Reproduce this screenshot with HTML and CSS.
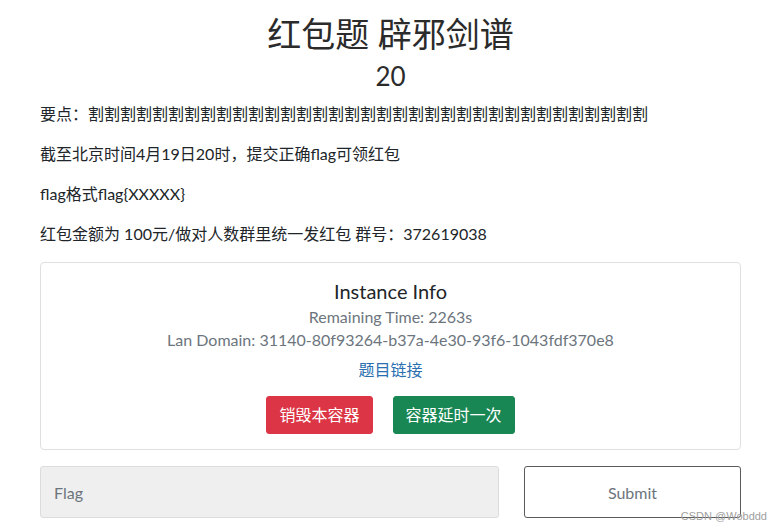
FILE: index.html
```html
<!DOCTYPE html>
<html lang="zh-CN">
<head>
<meta charset="utf-8">
<title>红包题 辟邪剑谱</title>
<link rel="stylesheet" href="styles.css">
</head>
<body>
<div class="container">
  <header class="challenge-head">
    <h1 class="challenge-title">红包题 辟邪剑谱</h1>
    <div class="challenge-score">20</div>
  </header>

  <div class="challenge-desc">
    <p>要点：割割割割割割割割割割割割割割割割割割割割割割割割割割割割割割割割割割割</p>
    <p>截至北京时间4月19日20时，提交正确flag可领红包</p>
    <p>flag格式flag{XXXXX}</p>
    <p>红包金额为 100元/做对人数群里统一发红包 群号：372619038</p>
  </div>

  <section class="card">
    <h5 class="card-title">Instance Info</h5>
    <div class="card-meta">Remaining Time: 2263s</div>
    <div class="card-meta">Lan Domain: 31140-80f93264-b37a-4e30-93f6-1043fdf370e8</div>
    <a class="card-link" href="#">题目链接</a>
    <div class="card-actions">
      <button class="btn btn-danger" type="button">销毁本容器</button>
      <button class="btn btn-success" type="button">容器延时一次</button>
    </div>
  </section>

  <form class="flag-form">
    <input class="flag-input" type="text" placeholder="Flag">
    <button class="btn-submit" type="button">Submit</button>
  </form>
</div>
<div class="watermark">CSDN @Wobddd</div>
</body>
</html>
```

FILE: styles.css
```css
* {
  box-sizing: border-box;
}

html, body {
  height: 100%;
}

body {
  margin: 0;
  background: #fff;
  color: #212529;
  font-family: Lato, "Noto Sans CJK SC", sans-serif;
  font-size: 16px;
  line-height: 24px;
  overflow: hidden;
}

.container {
  width: 701px;
  margin-left: 40px;
}

.challenge-head {
  text-align: center;
}

.challenge-title {
  margin: 0;
  padding-top: 14px;
  font-size: 34px;
  font-weight: 400;
  line-height: 40px;
  color: #2b2b2b;
}

.challenge-score {
  margin-top: 6px;
  font-size: 26px;
  line-height: 32px;
  color: #2b2b2b;
}

.challenge-desc {
  margin-top: 10px;
}

.challenge-desc p {
  margin: 0 0 16px;
  white-space: nowrap;
}

.card {
  margin-top: 11px;
  border: 1px solid #dfdfdf;
  border-radius: 4px;
  padding: 16px 16px 15px;
  text-align: center;
}

.card-title {
  margin: 0 0 2px;
  font-size: 20px;
  font-weight: 400;
  line-height: 24px;
  color: #212529;
}

.card-meta {
  color: #6c757d;
  line-height: 23px;
}

.card-link {
  display: inline-block;
  margin-top: 7px;
  color: #2a6fb0;
  text-decoration: none;
}

.card-actions {
  display: flex;
  justify-content: center;
  gap: 20px;
  margin-top: 14px;
}

.btn {
  font-family: inherit;
  font-size: 16px;
  line-height: 24px;
  padding: 6px 12px;
  border: 1px solid transparent;
  border-radius: 3px;
  color: #fff;
  cursor: pointer;
}

.btn-danger {
  background: #dc3545;
  border-color: #dc3545;
}

.btn-success {
  background: #198754;
  border-color: #198754;
}

.flag-form {
  display: flex;
  gap: 25px;
  margin-top: 16px;
}

.flag-input {
  flex: 0 0 459px;
  height: 52px;
  padding: 0 13px;
  border: 1px solid #dcdcdc;
  border-radius: 3px;
  background: #efefef;
  font-family: inherit;
  font-size: 16px;
  color: #212529;
}

.flag-input::placeholder {
  color: #6c757d;
}

.btn-submit {
  flex: 1;
  height: 52px;
  border: 1px solid #5a5a5a;
  border-radius: 3px;
  background: #fff;
  font-family: inherit;
  font-size: 16px;
  color: #6c757d;
}

.watermark {
  position: absolute;
  right: 14px;
  bottom: 7px;
  font-family: "Liberation Sans", sans-serif;
  font-size: 11px;
  line-height: 12px;
  color: #a0a0a0;
}
```
